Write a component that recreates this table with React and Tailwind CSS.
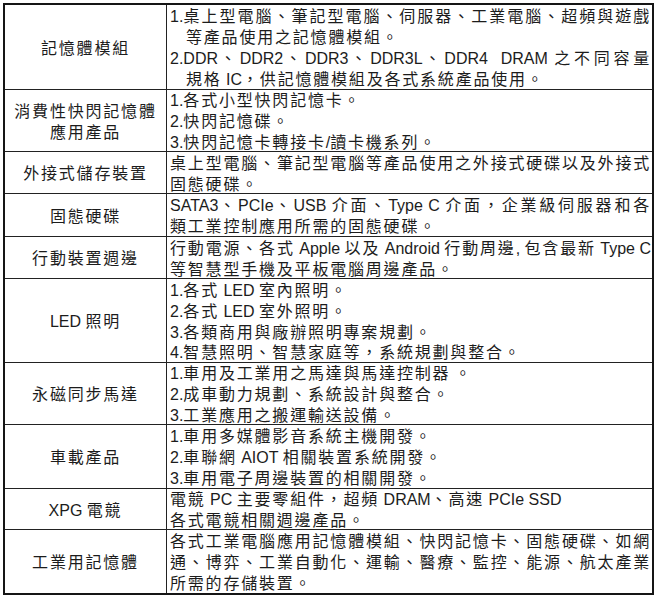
import React from "react";

// split a string into ascii (latin) and cjk runs so each gets its own font
const Mixed = ({ text }) => {
  const parts = text.split(/([\x00-\x7F]+)/);
  return (
    <>
      {parts.map((p, i) =>
        p === "" ? null : i % 2 === 1 ? (
          <span key={i} className="font-['Liberation_Sans',Arial,sans-serif] text-[16px] tracking-normal whitespace-pre">
            {p}
          </span>
        ) : (
          <span key={i} className="text-[16px] tracking-[1.8px]">
            {p}
          </span>
        )
      )}
    </>
  );
};

const rows = [
  {
    h: "h-[84px]",
    label: ["記憶體模組"],
    lines: [
      { t: "1.桌上型電腦、筆記型電腦、伺服器、工業電腦、超頻與遊戲", full: true },
      { t: "等產品使用之記憶體模組。", indent: true },
      { t: "2.DDR、DDR2、DDR3、DDR3L、DDR4  DRAM 之不同容量", full: true },
      { t: "規格 IC，供記憶體模組及各式系統產品使用。", indent: true },
    ],
  },
  {
    h: "h-[62px]",
    label: ["消費性快閃記憶體", "應用產品"],
    lines: [{ t: "1.各式小型快閃記憶卡。" }, { t: "2.快閃記憶碟。" }, { t: "3.快閃記憶卡轉接卡/讀卡機系列。" }],
  },
  {
    h: "h-[42px]",
    label: ["外接式儲存裝置"],
    lines: [{ t: "桌上型電腦、筆記型電腦等產品使用之外接式硬碟以及外接式", full: true }, { t: "固態硬碟。" }],
  },
  {
    h: "h-[43px]",
    label: ["固態硬碟"],
    lines: [{ t: "SATA3、PCIe、USB 介面、Type C 介面，企業級伺服器和各", full: true }, { t: "類工業控制應用所需的固態硬碟。" }],
  },
  {
    h: "h-[42px]",
    label: ["行動裝置週邊"],
    lines: [{ t: "行動電源、各式 Apple 以及 Android 行動周邊, 包含最新 Type C", full: true }, { t: "等智慧型手機及平板電腦周邊產品。" }],
  },
  {
    h: "h-[84px]",
    label: ["LED 照明"],
    lines: [
      { t: "1.各式 LED 室內照明。" },
      { t: "2.各式 LED 室外照明。" },
      { t: "3.各類商用與廠辦照明專案規劃。" },
      { t: "4.智慧照明、智慧家庭等，系統規劃與整合。" },
    ],
  },
  {
    h: "h-[62px]",
    label: ["永磁同步馬達"],
    lines: [{ t: "1.車用及工業用之馬達與馬達控制器 。" }, { t: "2.成車動力規劃、系統設計與整合。" }, { t: "3.工業應用之搬運輸送設備。" }],
  },
  {
    h: "h-[64px]",
    label: ["車載產品"],
    lines: [{ t: "1.車用多媒體影音系統主機開發。" }, { t: "2.車聯網 AIOT 相關裝置系統開發。" }, { t: "3.車用電子周邊裝置的相關開發。" }],
  },
  {
    h: "h-[41px]",
    label: ["XPG 電競"],
    lines: [{ t: "電競 PC 主要零組件，超頻 DRAM、高速 PCIe SSD" }, { t: "各式電競相關週邊產品。" }],
  },
  {
    h: "h-[64px]",
    label: ["工業用記憶體"],
    lines: [
      { t: "各式工業電腦應用記憶體模組、快閃記憶卡、固態硬碟、如網", full: true },
      { t: "通、博弈、工業自動化、運輸、醫療、監控、能源、航太產業", full: true },
      { t: "所需的存儲裝置。" },
    ],
  },
];

export default function App() {
  return (
    <div className="w-[664px] h-[600px] bg-white pt-[3px] pl-[3px] text-[#1c1c1c] font-['Noto_Sans_CJK_TC','Noto_Sans_CJK_SC',sans-serif] text-[16px]">
      <div className="w-[651px] border-2 border-[#151515] flex flex-col">
        {rows.map((row, i) => (
          <div key={i} className={`${row.h} flex ${i > 0 ? "border-t border-[#222]" : ""}`}>
            <div className="w-[162px] shrink-0 border-r border-[#222] flex flex-col items-center justify-center text-center">
              {row.label.map((l, j) => (
                <div key={j} className="h-[21px] leading-[21px] whitespace-nowrap">
                  <Mixed text={l} />
                </div>
              ))}
            </div>
            <div className="flex-1 min-w-0 pl-[3px] pr-[1px] flex flex-col justify-center">
              {row.lines.map((ln, j) => (
                <div
                  key={j}
                  className={`h-[20.8px] shrink-0 leading-[20.8px] whitespace-nowrap ${ln.full ? "text-justify [text-align-last:justify]" : ""} ${ln.indent ? "pl-[16px]" : ""}`}
                >
                  <Mixed text={ln.t} />
                </div>
              ))}
            </div>
          </div>
        ))}
      </div>
    </div>
  );
}
